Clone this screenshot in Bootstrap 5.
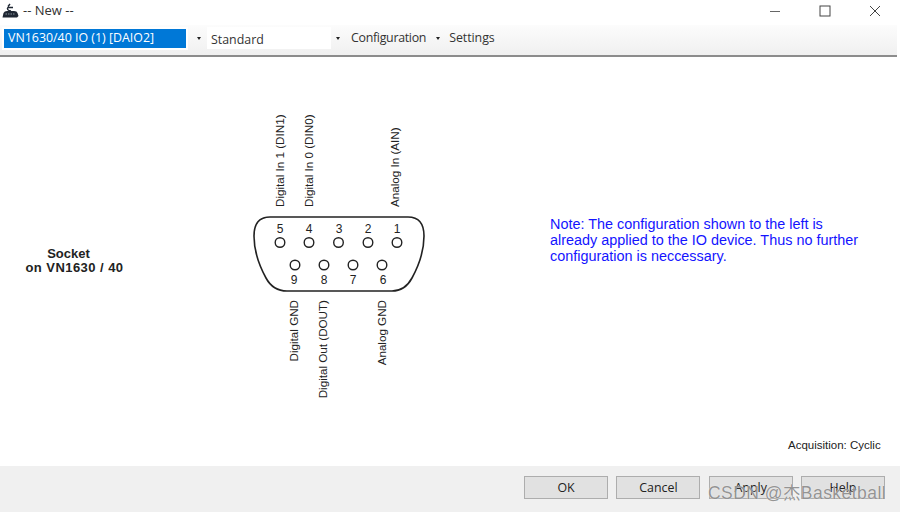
<!DOCTYPE html>
<html lang="en">
<head>
<meta charset="utf-8">
<title>-- New --</title>
<link href="https://cdn.jsdelivr.net/npm/bootstrap@5.3.0/dist/css/bootstrap.min.css" rel="stylesheet">
<style>
html,body{height:100%;margin:0;overflow:hidden}
body{font-family:"Open Sans","Noto Sans",sans-serif;background:#fff;color:#222}
.win{height:512px;width:900px}
.titlebar{height:25px;font-size:13px;color:#333;padding-left:2px}
.titlebar .ttl{margin-left:4px;margin-top:-4px}
.wbtn{width:50px;height:21px;margin-bottom:4px;display:flex;align-items:center;justify-content:center}
.toolbar{height:32px;background:linear-gradient(#fcfcfc,#f0f0f0);border-bottom:2px solid #8c8c8c;margin-right:3px;padding:2px 0 0 2px;font-size:12.4px;color:#333}
.selbox{background:#0078d7;color:#fff;width:182px;height:19px;line-height:18px;padding-left:4px;margin-left:2px;margin-top:2px;outline:2px solid #fff}
.caret-btn{width:14px;height:20px;display:flex;align-items:center;justify-content:center;margin-top:1px}
.caret-a{margin-left:6px}
.tri{width:0;height:0;border-left:2.5px solid transparent;border-right:2.5px solid transparent;border-top:3px solid #222;display:block}
.stdbox{background:#fff;width:124px;height:22px;line-height:26px;padding-left:4px;margin-left:1px}
.menuitem{line-height:20px;margin-top:1px}
.m-conf{margin-left:6px;letter-spacing:-.3px}
.caret-c{margin-left:5px}
.m-set{margin-left:4px;letter-spacing:-.05px}
.mainarea{height:409px;margin-right:3px}
.diagram{position:absolute;left:0;top:0}
.foot{height:46px;background:#f0f0f0;padding:10px 15px 0 0;gap:8.3px}
.foot .btn{width:84px;height:23px;padding:0;background:#e1e1e1;border:1px solid #adadad;border-radius:0;font-size:12.4px;line-height:20px;color:#222;font-family:"Open Sans",sans-serif}
.wm{position:absolute;left:708px;top:481px;font-size:17.5px;line-height:24px;color:rgba(120,120,120,.8);font-family:"Liberation Sans","Noto Sans CJK SC",sans-serif;white-space:nowrap;letter-spacing:.45px;text-shadow:0 0 1px #fff}
</style>
</head>
<body>
<div class="win position-relative d-flex flex-column">
  <div class="titlebar d-flex align-items-center justify-content-between">
    <div class="d-flex align-items-center">
      <svg width="17" height="15" viewBox="0 0 17 15" class="mb-1"><path d="M0.500 14.500 L1.500 10 Q2.500 8 5 8 L12 8 Q15 8 15.500 10 L16.500 13 L15 14.500 Z" fill="#1f2733"/><path d="M9 8 Q4 7 6 4.500 L11 4.500 M6 3.500 L8 1" stroke="#1f2733" stroke-width="1.400" fill="none"/><path d="M3.500 11h10" stroke="#8a96a0" stroke-width="1" stroke-dasharray="1.500 1"/></svg>
      <span class="ttl">-- New --</span>
    </div>
    <div class="d-flex">
      <div class="wbtn"><svg width="12" height="12"><path d="M1 6.500h10" stroke="#666" stroke-width="1"/></svg></div>
      <div class="wbtn"><svg width="12" height="12"><rect x="1" y="1" width="10" height="10" fill="none" stroke="#444" stroke-width="1"/></svg></div>
      <div class="wbtn"><svg width="12" height="12"><path d="M1 1l10 10M11 1L1 11" stroke="#444" stroke-width="1"/></svg></div>
    </div>
  </div>
  <div class="toolbar d-flex align-items-start">
    <div class="selbox">VN1630/40 IO (1) [DAIO2]</div>
    <div class="caret-btn caret-a"><span class="tri"></span></div>
    <div class="stdbox">Standard</div>
    <div class="caret-btn"><span class="tri"></span></div>
    <div class="menuitem m-conf">Configuration</div>
    <div class="caret-btn caret-c"><span class="tri"></span></div>
    <div class="menuitem m-set">Settings</div>
  </div>
  <div class="mainarea"></div>
  <svg class="diagram" width="900" height="512" viewBox="0 0 900 512" font-family="Liberation Sans, sans-serif" font-size="12" fill="#222">
    <path d="M270 217 H408 Q424 217 424 236 Q424 256 412 278 Q405 291 392 291 H287 Q273 291 266 278 Q254 256 254 236 Q254 217 270 217 Z" fill="none" stroke="#222" stroke-width="1.600"/>
    <g fill="none" stroke="#222" stroke-width="1.400">
      <circle cx="280" cy="242.500" r="4.800"/><circle cx="309" cy="242.500" r="4.800"/><circle cx="338.500" cy="242.500" r="4.800"/><circle cx="368" cy="242.500" r="4.800"/><circle cx="397" cy="242.500" r="4.800"/>
      <circle cx="295" cy="265" r="4.800"/><circle cx="324" cy="265" r="4.800"/><circle cx="353" cy="265" r="4.800"/><circle cx="382" cy="265" r="4.800"/>
    </g>
    <g text-anchor="middle">
      <text x="280" y="233">5</text><text x="309" y="233">4</text><text x="339" y="233">3</text><text x="368" y="233">2</text><text x="397" y="233">1</text>
      <text x="294" y="284">9</text><text x="324" y="284">8</text><text x="353" y="284">7</text><text x="383" y="284">6</text>
    </g>
    <g text-anchor="start" font-size="11.650">
      <text transform="translate(284.300 207) rotate(-90)">Digital In 1 (DIN1)</text>
      <text transform="translate(313.300 207) rotate(-90)">Digital In 0 (DIN0)</text>
      <text transform="translate(399.300 207) rotate(-90)">Analog In (AIN)</text>
    </g>
    <g text-anchor="end" font-size="11.650">
      <text transform="translate(298.300 300) rotate(-90)">Digital GND</text>
      <text transform="translate(327.300 300) rotate(-90)">Digital Out (DOUT)</text>
      <text transform="translate(386.300 300) rotate(-90)">Analog GND</text>
    </g>
    <g text-anchor="middle" font-size="13" font-weight="bold">
      <text x="68.500" y="258">Socket</text>
      <text x="74.500" y="272" letter-spacing=".45">on VN1630 / 40</text>
    </g>
    <g font-size="14.420" fill="#1414ff">
      <text x="550" y="229">Note: The configuration shown to the left is</text>
      <text x="550" y="245">already applied to the IO device. Thus no further</text>
      <text x="550" y="261">configuration is neccessary.</text>
    </g>
    <text x="788" y="449" font-size="11.500">Acquisition: Cyclic</text>
  </svg>
  <div class="foot d-flex justify-content-end">
    <button class="btn" type="button">OK</button>
    <button class="btn" type="button">Cancel</button>
    <button class="btn" type="button">Apply</button>
    <button class="btn" type="button">Help</button>
  </div>
  <div class="wm">CSDN @杰Basketball</div>
</div>
</body>
</html>
